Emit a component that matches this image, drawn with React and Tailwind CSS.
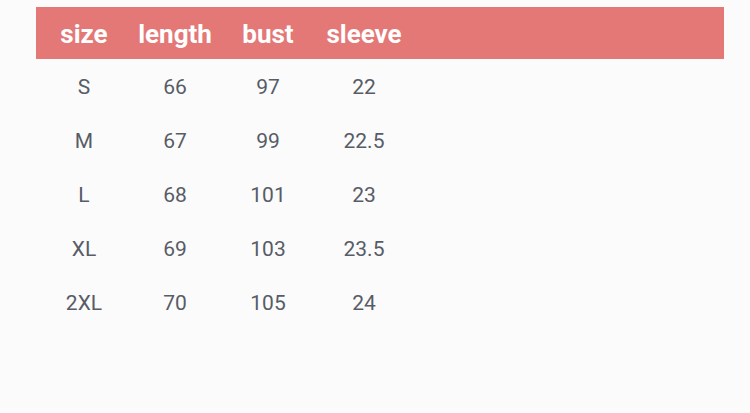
const rows = [
  ['S', '66', '97', '22'],
  ['M', '67', '99', '22.5'],
  ['L', '68', '101', '23'],
  ['XL', '69', '103', '23.5'],
  ['2XL', '70', '105', '24'],
];

const cols = ['w-[96px]', 'w-[86px]', 'w-[100px]', 'w-[92px]'];
const heads = ['size', 'length', 'bust', 'sleeve'];

export default function App() {
  return (
    <div className="w-[750px] h-[413px] bg-[#fbfbfb] pt-[7px] pl-[36px] overflow-hidden" style={{ fontFamily: 'Roboto, "Liberation Sans", sans-serif' }}>
      <div className="w-[688px] h-[52px] bg-[#e37877] flex items-center">
        {heads.map((h, i) => (
          <div key={h} className={`${cols[i]} text-center text-white font-bold text-[26px] leading-none pt-[1px]`}>
            {h}
          </div>
        ))}
      </div>
      <div className="pt-px">
        {rows.map((r) => (
          <div key={r[0]} className="flex items-center h-[54px]">
            {r.map((v, i) => (
              <div key={i} className={`${cols[i]} text-center text-[21px] leading-none text-[#575c66]`}>
                {v}
              </div>
            ))}
          </div>
        ))}
      </div>
    </div>
  );
}
